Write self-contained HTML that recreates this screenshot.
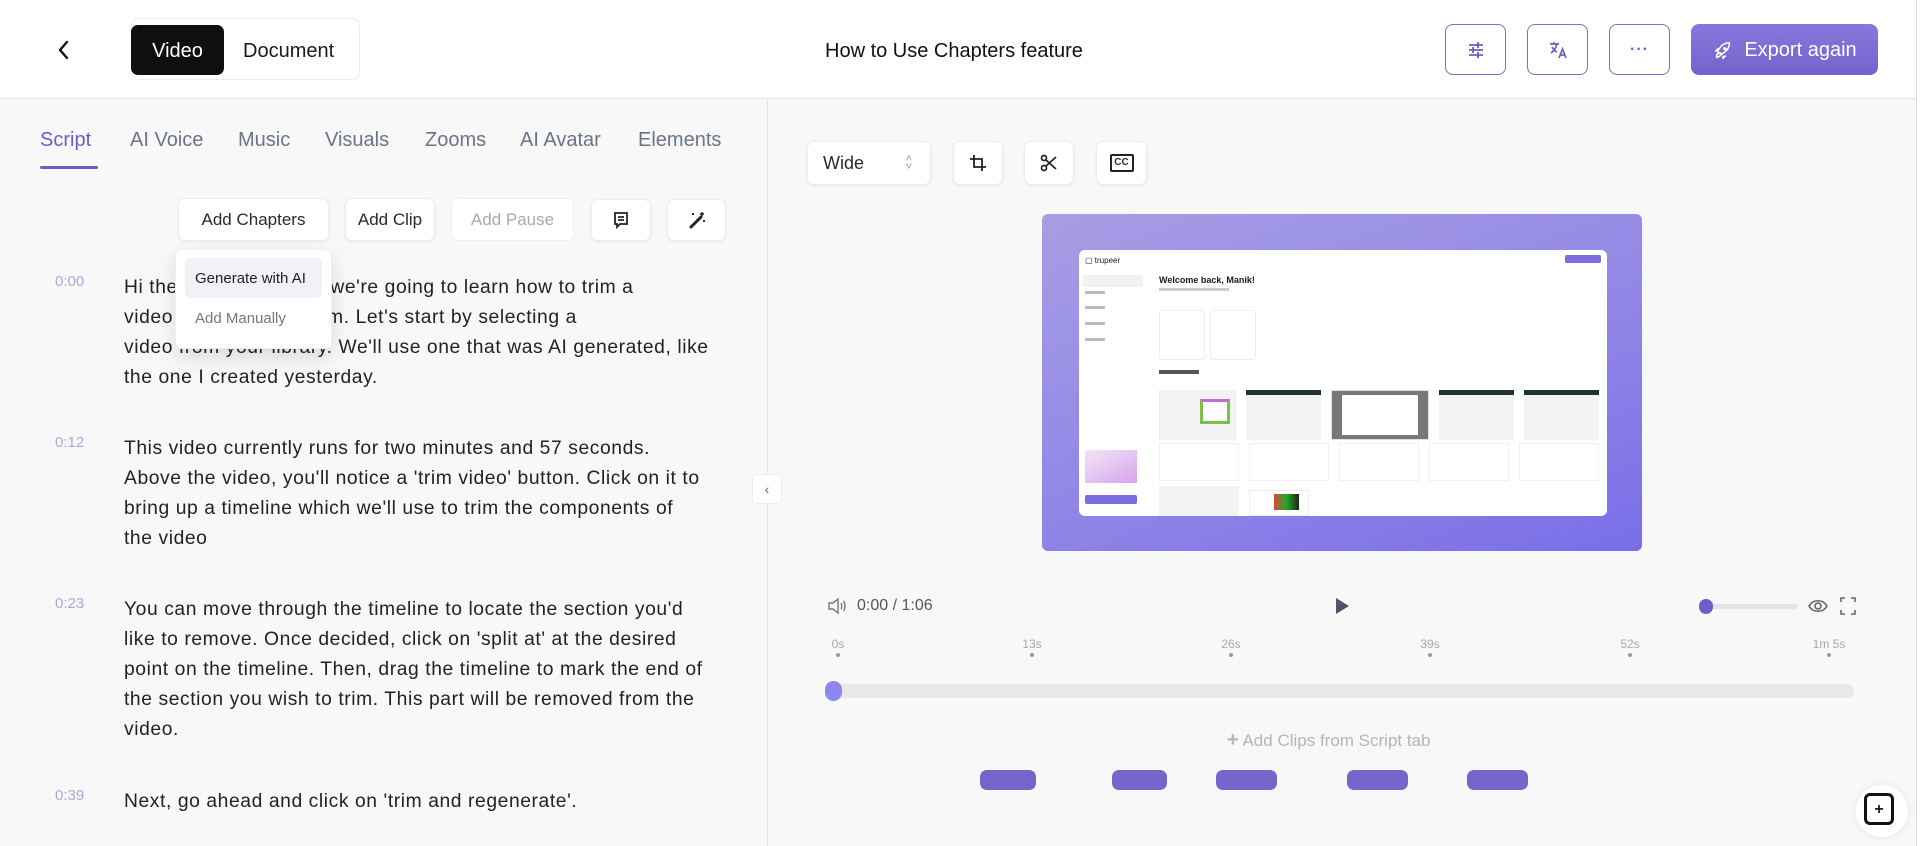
<!DOCTYPE html>
<html><head><meta charset="utf-8"><style>
*{box-sizing:border-box;margin:0;padding:0}
body{width:1920px;height:846px;overflow:hidden;background:#f8f8f9;font-family:"Liberation Sans",sans-serif;color:#1a1a1a;position:relative}
.a{position:absolute}
.hdr{left:0;top:0;width:1920px;height:99px;background:#fff;border-bottom:1px solid #e6e6e8}
.ib{border:1.5px solid #7a6fd0;border-radius:8px;background:#fff;display:flex;align-items:center;justify-content:center}
.tab{top:129px;font-size:20px;color:#6b7488}
.btn{background:#fff;border:1px solid #ececef;border-radius:7px;box-shadow:0 1px 3px rgba(0,0,0,.06);display:flex;align-items:center;justify-content:center;font-size:17px;color:#2a2a2a}
.ts{left:55px;font-size:15px;color:#a9a8dc}
.tx{left:124px;font-size:19.3px;letter-spacing:0.58px;line-height:30px;color:#222;white-space:nowrap}
.tl{font-size:12px;color:#a8a8ad;top:637px;transform:translateX(-50%)}
.dot{width:4px;height:4px;border-radius:2px;background:#999;top:653px}
.pill{top:770px;height:20px;border-radius:7px;background:#7566cc}
.sq{background:#fff;border:1px solid #eee;border-radius:3px}
</style></head><body>
<div class="a hdr"></div>
<svg class="a" style="left:56px;top:39px" width="16" height="22" viewBox="0 0 16 22"><path d="M11 3L4 11l7 8" fill="none" stroke="#111" stroke-width="2.4" stroke-linecap="round" stroke-linejoin="round"/></svg>
<div class="a" style="left:131px;top:18px;width:229px;height:62px;border:1px solid #eeeef0;border-radius:8px;background:#fff"></div>
<div class="a" style="left:131px;top:25px;width:93px;height:50px;background:#0f0f0f;border-radius:7px;color:#fff;font-size:20px;display:flex;align-items:center;justify-content:center;padding-top:2px">Video</div>
<div class="a" style="left:243px;top:40px;font-size:20px">Document</div>
<div class="a" style="left:825px;top:40px;font-size:20px;color:#111">How to Use Chapters feature</div>
<div class="a ib" style="left:1445px;top:24px;width:61px;height:51px"><svg width="20" height="20" viewBox="0 0 20 20" stroke="#6a5fc4" stroke-width="1.8" fill="none"><path d="M3 5h14M3 10h14M3 15h14M12 2v6M7 7v6M12 12v6"/></svg></div>
<div class="a ib" style="left:1527px;top:24px;width:61px;height:51px"><svg width="22" height="22" viewBox="0 0 22 22" stroke="#6a5fc4" stroke-width="1.7" fill="none"><path d="M3 5h9M7 3v2M10 5c-1 4-3 7-6 9M5 8c1 2 3 4 5 5M12 19l3.5-9 3.5 9M13.3 16h4.4"/></svg></div>
<div class="a ib" style="left:1609px;top:24px;width:61px;height:51px;color:#6a5fc4;font-size:16px;font-weight:bold;letter-spacing:1px">···</div>
<div class="a" style="left:1691px;top:24px;width:187px;height:51px;border-radius:8px;background:linear-gradient(#8678dc,#7264cc);color:#fff;font-size:20px;display:flex;align-items:center;justify-content:center;gap:10px;padding-top:2px"><svg width="22" height="22" viewBox="0 0 24 24" fill="none" stroke="#fff" stroke-width="1.7" stroke-linejoin="round"><path d="M5 19c0-3 1-5 3-5s2 2 1 3-3 2-4 2zM9 15l-3-3 3-4c3-4 7-5 10-5 0 3-1 7-5 10l-4 3zM14 8.5a1 1 0 1 0 .01 0M7 12l-3 0 3-3M12 17v3l3-3"/></svg>Export again</div>
<div class="a" style="left:1916px;top:0;width:4px;height:846px;background:#fff;border-left:1px solid #ddd"></div>

<div class="a" style="left:767px;top:99px;width:1px;height:747px;background:#e6e6e8"></div>
<div class="a tab" style="left:40px;color:#6a5fc8">Script</div>
<div class="a" style="left:40px;top:166px;width:58px;height:3px;background:#6a5fc8;border-radius:2px"></div>
<div class="a tab" style="left:130px">AI Voice</div>
<div class="a tab" style="left:238px">Music</div>
<div class="a tab" style="left:325px">Visuals</div>
<div class="a tab" style="left:425px">Zooms</div>
<div class="a tab" style="left:520px">AI Avatar</div>
<div class="a tab" style="left:638px">Elements</div>

<div class="a btn" style="left:178px;top:198px;width:151px;height:43px">Add Chapters</div>
<div class="a btn" style="left:345px;top:198px;width:90px;height:43px">Add Clip</div>
<div class="a btn" style="left:451px;top:198px;width:123px;height:43px;color:#a9a9ae;box-shadow:none;border-color:#f0f0f2">Add Pause</div>
<div class="a btn" style="left:591px;top:199px;width:60px;height:42px"><svg width="18" height="18" viewBox="0 0 18 18" fill="none" stroke="#222" stroke-width="1.8"><path d="M3 2h12v11H8l-3 3v-3H3zM6 6h6M6 9h6"/></svg></div>
<div class="a btn" style="left:667px;top:199px;width:59px;height:42px"><svg width="20" height="20" viewBox="0 0 20 20"><path d="M4 17L14 7" stroke="#222" stroke-width="3" stroke-linecap="round"/><path d="M15 2v4M13 4h4M6 3v2M5 4h2M17 10v2M16 11h2" stroke="#222" stroke-width="1.4"/></svg></div>

<div class="ts a" style="top:273px">0:00</div>
<div class="tx a" style="top:273px">Hi there! In this video, we're going to learn how to trim a<br>video using our platform. Let's start by selecting a<br>video from your library. We'll use one that was AI generated, like<br>the one I created yesterday.</div>
<div class="ts a" style="top:434px">0:12</div>
<div class="tx a" style="top:434px">This video currently runs for two minutes and 57 seconds.<br>Above the video, you'll notice a 'trim video' button. Click on it to<br>bring up a timeline which we'll use to trim the components of<br>the video</div>
<div class="ts a" style="top:595px">0:23</div>
<div class="tx a" style="top:595px">You can move through the timeline to locate the section you'd<br>like to remove. Once decided, click on 'split at' at the desired<br>point on the timeline. Then, drag the timeline to mark the end of<br>the section you wish to trim. This part will be removed from the<br>video.</div>
<div class="ts a" style="top:787px">0:39</div>
<div class="tx a" style="top:787px">Next, go ahead and click on 'trim and regenerate'.</div>

<div class="a" style="left:175px;top:249px;width:157px;height:100px;background:#fff;border:1px solid #eee;border-radius:6px;box-shadow:0 8px 20px rgba(0,0,0,.12)"></div>
<div class="a" style="left:185px;top:258px;width:137px;height:40px;background:#f1f2f6;border-radius:5px;font-size:15px;color:#222;display:flex;align-items:center;padding-left:10px">Generate with AI</div>
<div class="a" style="left:195px;top:310px;font-size:15px;color:#777">Add Manually</div>

<div class="a" style="left:752px;top:474px;width:30px;height:30px;background:#fff;border:1px solid #eee;border-radius:5px;font-size:14px;color:#666;display:flex;align-items:center;justify-content:center">‹</div>

<div class="a btn" style="left:807px;top:141px;width:124px;height:44px;justify-content:flex-start;padding-left:15px;font-size:18px">Wide<span style="position:absolute;right:18px;font-size:11px;color:#999;line-height:8px;text-align:center">˄<br>˅</span></div>
<div class="a btn" style="left:953px;top:141px;width:50px;height:44px"><svg width="18" height="18" viewBox="0 0 18 18" fill="none" stroke="#222" stroke-width="1.8"><path d="M5 1v12h12M1 5h12v12"/></svg></div>
<div class="a btn" style="left:1024px;top:141px;width:50px;height:44px"><svg width="18" height="18" viewBox="0 0 18 18" fill="none" stroke="#222" stroke-width="1.7"><circle cx="4" cy="4" r="2.5"/><circle cx="4" cy="14" r="2.5"/><path d="M6 6l10 9M6 12l10-9"/></svg></div>
<div class="a btn" style="left:1096px;top:141px;width:51px;height:44px"><div style="width:24px;height:18px;border:2px solid #222;border-radius:2px;font-size:10px;font-weight:bold;text-align:center;line-height:14px">CC</div></div>

<div class="a" style="left:1042px;top:214px;width:600px;height:337px;border-radius:6px;background:linear-gradient(160deg,#a79de4 0%,#9388e6 50%,#7a6ee8 100%)"></div>
<div class="a" style="left:1079px;top:250px;width:528px;height:266px;background:#fff;border-radius:6px;overflow:hidden">
 <div class="a" style="left:6px;top:6px;font-size:8px">▢ trupeer</div>
 <div class="a" style="right:6px;top:5px;width:36px;height:8px;background:#7a6de0;border-radius:2px"></div>
 <div class="a" style="left:4px;top:25px;width:60px;height:12px;background:#f2f2f4"></div>
 <div class="a" style="left:6px;top:41px;width:20px;height:3px;background:#bbb;box-shadow:0 15px 0 #bbb,0 31px 0 #bbb,0 47px 0 #bbb"></div>
 <div class="a" style="left:80px;top:25px;font-size:9px;font-weight:bold">Welcome back, Manik!</div>
 <div class="a" style="left:80px;top:38px;width:70px;height:3px;background:#ccc"></div>
 <div class="a sq" style="left:80px;top:60px;width:46px;height:50px"></div>
 <div class="a sq" style="left:131px;top:60px;width:46px;height:50px"></div>
 <div class="a" style="left:80px;top:120px;width:40px;height:4px;background:#555"></div>
 <div class="a" style="left:80px;top:140px;width:440px;height:50px;display:flex;gap:10px">
  <div style="flex:1;background:#f3f3f5;border:1px solid #eee;position:relative"><div style="position:absolute;right:5px;top:8px;width:30px;height:25px;border:3px solid #7ac04a;border-top-color:#c56ad8;background:#fff"></div></div>
  <div style="flex:1;background:#f3f3f5;border-top:5px solid #20332a"></div>
  <div style="flex:1;background:#777;border:1px solid #ddd;padding:4px 10px"><div style="background:#fff;height:40px"></div></div>
  <div style="flex:1;background:#f3f3f5;border-top:5px solid #20332a"></div>
  <div style="flex:1;background:#f3f3f5;border-top:5px solid #20332a"></div>
 </div>
 <div class="a" style="left:80px;top:193px;width:440px;height:38px;display:flex;gap:10px">
  <div style="flex:1;border:1px solid #f0f0f0"></div><div style="flex:1;border:1px solid #f0f0f0"></div><div style="flex:1;border:1px solid #f0f0f0"></div><div style="flex:1;border:1px solid #f0f0f0"></div><div style="flex:1;border:1px solid #f0f0f0"></div>
 </div>
 <div class="a" style="left:6px;top:200px;width:52px;height:33px;background:linear-gradient(150deg,#f3e6f7,#d7a3ec)"></div>
 <div class="a" style="left:6px;top:245px;width:52px;height:9px;background:#7a6de0;border-radius:2px"></div>
 <div class="a" style="left:80px;top:236px;width:80px;height:30px;background:#f3f3f5"></div>
 <div class="a" style="left:170px;top:240px;width:60px;height:26px;border:1px solid #eee"></div>
 <div class="a" style="left:195px;top:244px;width:25px;height:16px;background:linear-gradient(90deg,#d44,#2a2,#222)"></div>
</div>

<svg class="a" style="left:827px;top:597px" width="20" height="18" viewBox="0 0 20 18" fill="none" stroke="#777" stroke-width="1.4"><path d="M2 6h4l5-4v14l-5-4H2zM14 6c1 1.5 1 4.5 0 6M16.5 4c2 3 2 7 0 10"/></svg>
<div class="a" style="left:857px;top:597px;font-size:16px;color:#555">0:00 / 1:06</div>
<svg class="a" style="left:1334px;top:597px" width="16" height="18" viewBox="0 0 16 18"><path d="M2 1l13 8-13 8z" fill="#4e5566"/></svg>
<div class="a" style="left:1704px;top:604px;width:94px;height:5px;background:#e4e4e8;border-radius:3px"></div>
<div class="a" style="left:1699px;top:599px;width:14px;height:15px;border-radius:7px;background:#6a5fc8"></div>
<svg class="a" style="left:1808px;top:597px" width="20" height="18" viewBox="0 0 20 18" fill="none" stroke="#666" stroke-width="1.6"><path d="M1 9c4-7 14-7 18 0-4 7-14 7-18 0z"/><circle cx="10" cy="9" r="3"/></svg>
<svg class="a" style="left:1840px;top:597px" width="16" height="18" viewBox="0 0 16 18" fill="none" stroke="#666" stroke-width="1.6"><path d="M1 5V1h4M11 1h4v4M15 13v4h-4M5 17H1v-4"/></svg>

<div class="a tl" style="left:838px">0s</div><div class="a dot" style="left:836px"></div>
<div class="a tl" style="left:1032px">13s</div><div class="a dot" style="left:1030px"></div>
<div class="a tl" style="left:1231px">26s</div><div class="a dot" style="left:1229px"></div>
<div class="a tl" style="left:1430px">39s</div><div class="a dot" style="left:1428px"></div>
<div class="a tl" style="left:1630px">52s</div><div class="a dot" style="left:1628px"></div>
<div class="a tl" style="left:1829px">1m 5s</div><div class="a dot" style="left:1827px"></div>

<div class="a" style="left:826px;top:684px;width:1028px;height:14px;background:#e8e8eb;border-radius:7px"></div>
<div class="a" style="left:825px;top:681px;width:17px;height:20px;border-radius:9px;background:#8c86f3"></div>
<div class="a" style="left:1227px;top:729px;font-size:17px;color:#b4b4ba"><b style="font-size:20px">+</b> Add Clips from Script tab</div>

<div class="a pill" style="left:980px;width:56px"></div>
<div class="a pill" style="left:1112px;width:55px"></div>
<div class="a pill" style="left:1216px;width:61px"></div>
<div class="a pill" style="left:1347px;width:61px"></div>
<div class="a pill" style="left:1467px;width:61px"></div>

<div class="a" style="left:1856px;top:785px;width:52px;height:52px;border-radius:26px;background:#fff;box-shadow:0 0 8px rgba(0,0,0,.08)"></div>
<div class="a" style="left:1864px;top:793px;width:30px;height:32px;border:3px solid #111;border-radius:6px;font-size:16px;font-weight:bold;text-align:center;line-height:28px">+</div>
</body></html>
